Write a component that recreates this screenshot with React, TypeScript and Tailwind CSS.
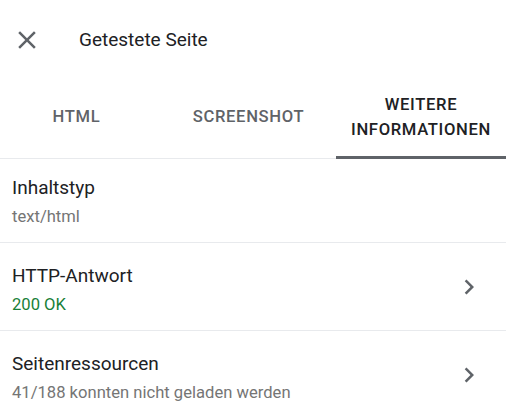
import React from "react";

const font = { fontFamily: "Roboto, 'Noto Sans', sans-serif" };

function Chevron() {
  return (
    <svg width="30" height="30" viewBox="0 0 24 24" className="shrink-0">
      <path d="M10 6L8.59 7.41 13.17 12l-4.58 4.59L10 18l6-6z" fill="#5f6368" />
    </svg>
  );
}

function Row({
  title,
  sub,
  subClass,
  chevron,
  topPad,
  border,
}: {
  title: string;
  sub: string;
  subClass: string;
  chevron?: boolean;
  topPad: string;
  border?: boolean;
}) {
  return (
    <div className={`flex items-center pl-[12px] pr-[22px] ${border ? "border-b border-[#e8eaed]" : ""}`}>
      <div className={`flex-1 flex flex-col ${topPad} pb-[13px]`}>
        <div className="text-[19px] leading-[26px] text-[#202124]">{title}</div>
        <div className={`mt-[4px] text-[16.6px] leading-[24px] ${subClass}`}>{sub}</div>
      </div>
      {chevron && <Chevron />}
    </div>
  );
}

export default function App() {
  return (
    <div className="w-[506px] h-[412px] bg-white overflow-hidden" style={font}>
      <div className="flex items-center h-[80px] pl-[12px]">
        <svg width="30" height="30" viewBox="0 0 24 24" className="shrink-0">
          <path
            d="M19 6.41L17.59 5 12 10.59 6.41 5 5 6.41 10.59 12 5 17.59 6.41 19 12 13.41 17.59 19 19 17.59 13.41 12z"
            fill="#5f6368"
          />
        </svg>
        <div className="ml-[37px] text-[19px] text-[#202124]">Getestete Seite</div>
      </div>
      <div className="flex h-[79px] border-b border-[#e8eaed]">
        <div className="w-[153px] flex items-center justify-center pb-[4px] text-[16.6px] font-medium tracking-[0.04em] text-[#5f6368]">
          HTML
        </div>
        <div className="w-[183px] flex items-center justify-center pl-[8px] pb-[4px] text-[16.6px] font-medium tracking-[0.04em] text-[#5f6368]">
          SCREENSHOT
        </div>
        <div className="flex-1 relative flex items-center justify-center pb-[4px] text-center text-[16.6px] leading-[25px] font-medium tracking-[0.04em] text-[#202124]">
          <div>
            WEITERE
            <br />
            INFORMATIONEN
          </div>
          <div className="absolute left-0 right-0 bottom-[-1px] h-[3px] bg-[#5f6368]" />
        </div>
      </div>
      <Row title="Inhaltstyp" sub="text/html" subClass="text-[#757575]" topPad="pt-[16px]" border />
      <Row title="HTTP-Antwort" sub="200 OK" subClass="text-[#188038]" chevron topPad="pt-[20px]" border />
      <Row
        title="Seitenressourcen"
        sub="41/188 konnten nicht geladen werden"
        subClass="text-[#757575]"
        chevron
        topPad="pt-[20px]"
      />
    </div>
  );
}
